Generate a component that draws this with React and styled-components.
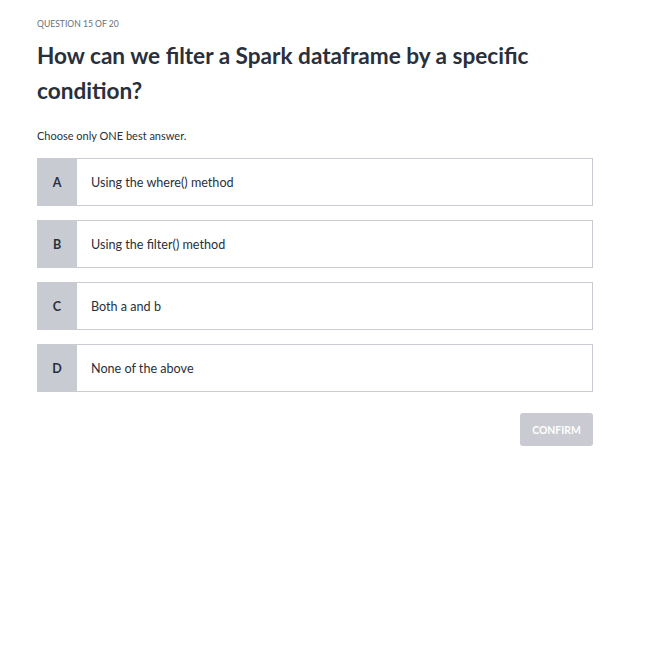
import React from "react";
import styled, { createGlobalStyle } from "styled-components";

const GlobalStyle = createGlobalStyle`
  body {
    margin: 0;
    background: #fff;
    font-family: Lato, "Open Sans", "Liberation Sans", sans-serif;
    color: #29303b;
  }
`;

const Page = styled.div`
  width: 556px;
  padding: 17px 0 0 37px;
`;

const Counter = styled.div`
  font-size: 8.6px;
  line-height: 14px;
  color: #686f7a;
  text-transform: uppercase;
`;

const Question = styled.h1`
  margin: 7px 0 0;
  font-size: 22.6px;
  line-height: 35px;
  font-weight: 700;
  color: #29303b;
`;

const Hint = styled.p`
  margin: 20px 0 14px;
  font-size: 11px;
  line-height: 16px;
  color: #29303b;
`;

const Options = styled.div`
  display: flex;
  flex-direction: column;
  gap: 14px;
`;

const Option = styled.label`
  display: flex;
  height: 48px;
  box-sizing: border-box;
  border: 1px solid #c9cbd3;
  background: #fff;
  cursor: pointer;
`;

const Letter = styled.span`
  width: 40px;
  flex: none;
  display: flex;
  align-items: center;
  justify-content: center;
  background: #c9cbd3;
  font-size: 12.5px;
  font-weight: 700;
  color: #29303b;
  margin: -1px 0 -1px -1px;
`;

const Answer = styled.span`
  display: flex;
  align-items: center;
  padding-left: 14px;
  font-size: 12.6px;
  color: #29303b;
`;

const Footer = styled.div`
  display: flex;
  justify-content: flex-end;
  margin-top: 21px;
`;

const Confirm = styled.button`
  width: 73px;
  height: 33px;
  border: none;
  border-radius: 3px;
  background: #c9cad2;
  color: #fff;
  font-family: inherit;
  font-size: 10.4px;
  font-weight: 700;
  text-transform: uppercase;
  cursor: not-allowed;
`;

const answers = [
  ["A", "Using the where() method"],
  ["B", "Using the filter() method"],
  ["C", "Both a and b"],
  ["D", "None of the above"],
];

export default function App() {
  return (
    <>
      <GlobalStyle />
      <Page>
        <Counter>Question 15 of 20</Counter>
        <Question>How can we filter a Spark dataframe by a specific condition?</Question>
        <Hint>Choose only ONE best answer.</Hint>
        <Options>
          {answers.map(([letter, text]) => (
            <Option key={letter}>
              <Letter>{letter}</Letter>
              <Answer>{text}</Answer>
            </Option>
          ))}
        </Options>
        <Footer>
          <Confirm disabled>Confirm</Confirm>
        </Footer>
      </Page>
    </>
  );
}
